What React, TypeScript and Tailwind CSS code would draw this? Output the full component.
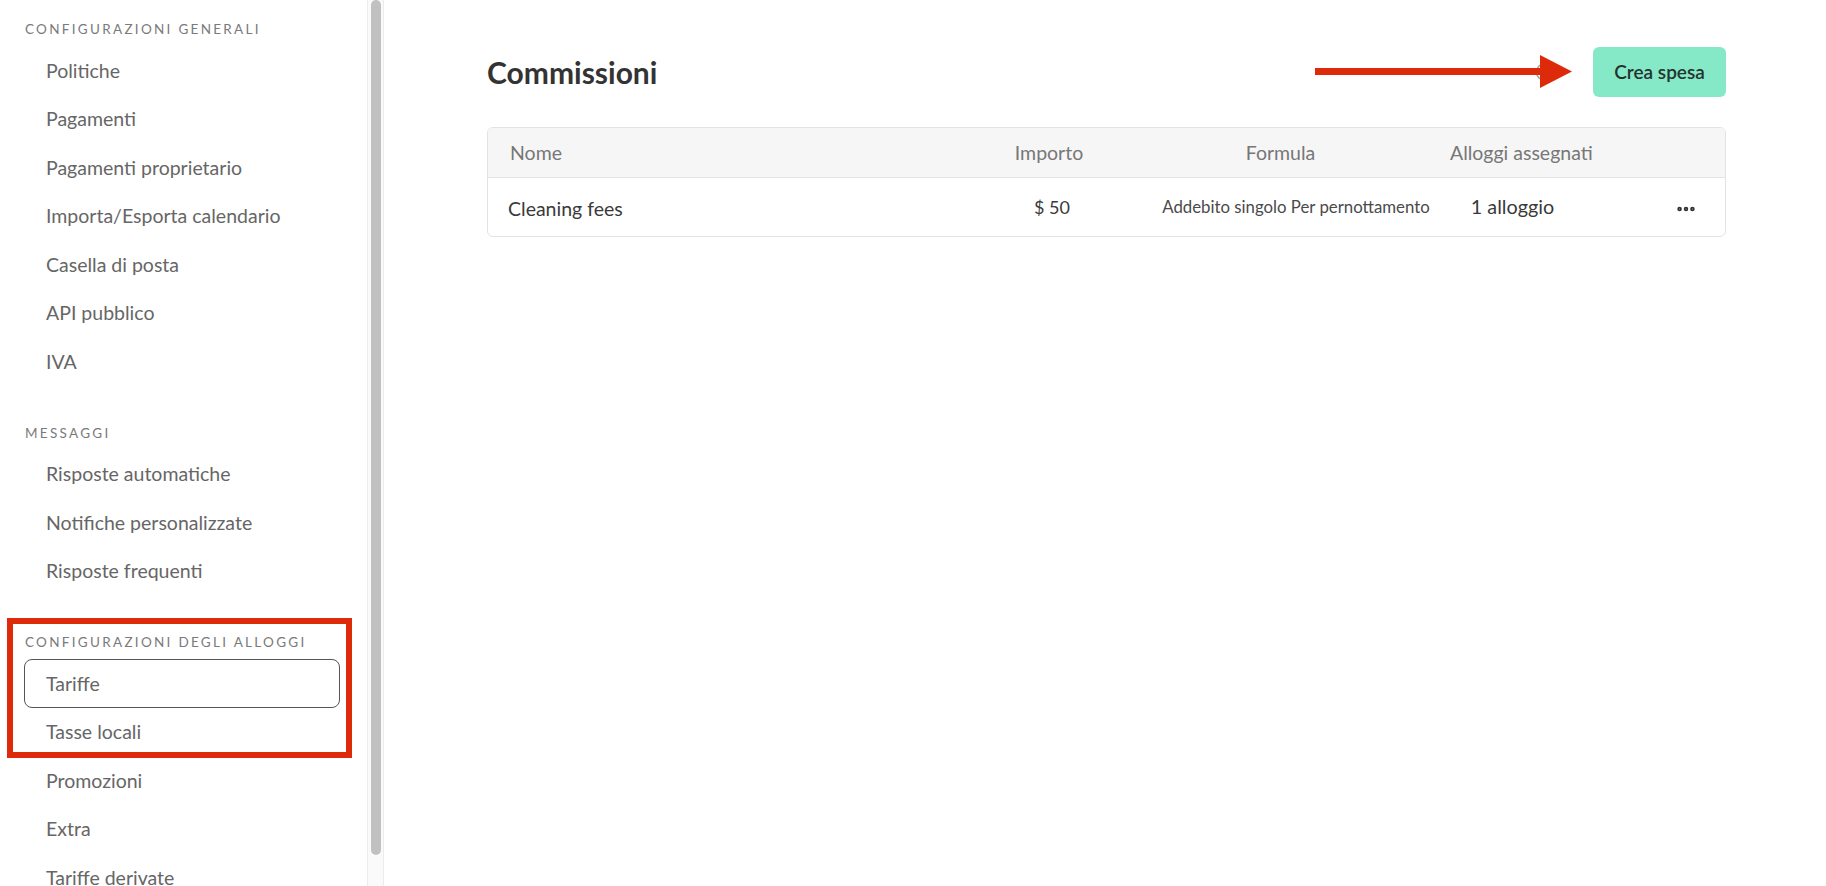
import { MoreHorizontal } from "lucide-react";

const sections = [
  {
    title: "CONFIGURAZIONI GENERALI",
    items: [
      "Politiche",
      "Pagamenti",
      "Pagamenti proprietario",
      "Importa/Esporta calendario",
      "Casella di posta",
      "API pubblico",
      "IVA",
    ],
  },
  {
    title: "MESSAGGI",
    items: ["Risposte automatiche", "Notifiche personalizzate", "Risposte frequenti"],
  },
  {
    title: "CONFIGURAZIONI DEGLI ALLOGGI",
    items: ["Tariffe", "Tasse locali", "Promozioni", "Extra", "Tariffe derivate"],
  },
];

const Sidebar = () => (
  <aside className="w-[367px] shrink-0 pt-[17px]">
    {sections.map((section, i) => (
      <div key={section.title} className={i > 0 ? "mt-[35px]" : ""}>
        <div className="h-6 pl-[25px] text-[13.5px] leading-6 tracking-[0.17em] text-[#7a7a7a] mb-[5px]">
          {section.title}
        </div>
        {section.items.map((item) => (
          <div
            key={item}
            className={`ml-[24px] mr-[27px] h-[48.5px] flex items-center px-[21px] rounded-lg text-[19.5px] text-[#666666] whitespace-nowrap ${
              item === "Tariffe" ? "border border-[#555555]" : "border border-transparent"
            }`}
          >
            {item}
          </div>
        ))}
      </div>
    ))}
  </aside>
);

const Scrollbar = () => (
  <div className="w-[17px] shrink-0 border-l border-r border-[#ececec] bg-[#fafafa] flex justify-center">
    <div className="w-[10px] h-[855px] rounded-full bg-[#c1c1c1]" />
  </div>
);

const cols = "grid grid-cols-[490px_148px_324px_144px_1fr]";

const Main = () => (
  <main className="relative flex-1 pl-[103px] pr-[100px] pt-[47px]">
    <div className="flex items-center justify-between h-[50px]">
      <h1 className="text-[30px] font-bold text-[#333333]">Commissioni</h1>
      <div className="flex items-center gap-[38px]">
        <svg width="20" height="20" viewBox="0 0 20 20" className="text-[#9a9a9a]">
          <circle cx="10" cy="10" r="8.5" fill="none" stroke="currentColor" strokeWidth="1.3" />
        </svg>
        <button className="h-[50px] w-[133px] rounded-md bg-[#85e9c7] text-[19px] font-semibold text-[#24332e]">
          Crea spesa
        </button>
      </div>
    </div>

    <div className="mt-[30px] rounded-md border border-[#e3e3e3] overflow-hidden">
      <div className={`${cols} h-[50px] items-center bg-[#f6f6f6] border-b border-[#e3e3e3] text-[19.5px] text-[#777777]`}>
        <div className="pl-[22px]">Nome</div>
        <div className="text-center pr-[6px]">Importo</div>
        <div className="text-center pr-[15px]">Formula</div>
        <div className="text-center whitespace-nowrap pr-[7px]">Alloggi assegnati</div>
        <div />
      </div>
      <div className={`${cols} h-[58px] items-center text-[#3a3a3a]`}>
        <div className="pl-[20px] text-[19.5px] pt-[3px]">Cleaning fees</div>
        <div className="text-center text-[18px]">$ 50</div>
        <div className="text-center text-[16.8px] text-[#4a4a4a] whitespace-nowrap pl-[16px]">
          Addebito singolo Per pernottamento
        </div>
        <div className="text-center text-[19.8px] pr-[19px] whitespace-nowrap">1 alloggio</div>
        <div className="flex justify-end pr-[28px] pt-[4px]">
          <MoreHorizontal size={22} strokeWidth={3} className="text-[#333333]" />
        </div>
      </div>
    </div>

    {/* annotation arrow */}
    <svg
      className="absolute left-[931px] top-[55px]"
      width="258"
      height="33"
      viewBox="0 0 258 33"
    >
      <rect x="0" y="13" width="228" height="7" fill="#dc2a0b" />
      <polygon points="225,0 257,16.5 225,33" fill="#dc2a0b" />
    </svg>
  </main>
);

export default function App() {
  return (
    <div className="relative flex h-[886px] w-[1826px] overflow-hidden bg-white font-['Lato',sans-serif]">
      <Sidebar />
      <Scrollbar />
      <Main />
      {/* annotation box */}
      <div className="absolute left-[7px] top-[618px] w-[345px] h-[140px] border-[6px] border-[#dc2a0b] pointer-events-none" />
    </div>
  );
}
